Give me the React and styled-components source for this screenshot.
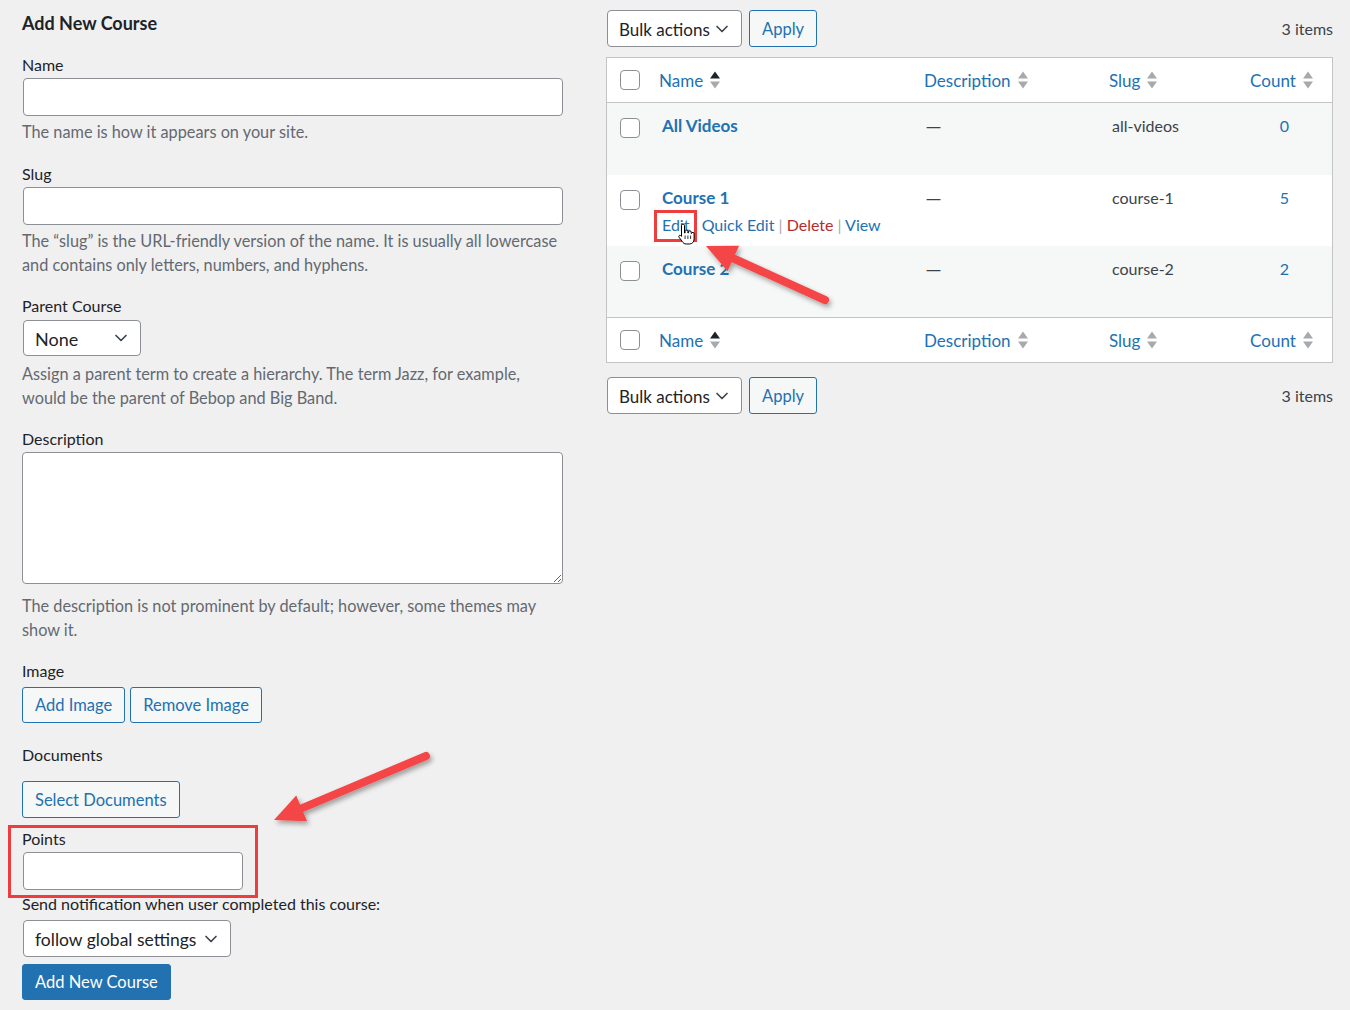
import styled, { createGlobalStyle } from "styled-components";
import { ChevronDown } from "lucide-react";

const GlobalStyle = createGlobalStyle`
body{
    margin: 0;
    background: #f0f0f1;
    font-family: Lato, "Noto Sans", sans-serif;
    color: #1d2327;
}
*{
    box-sizing: border-box;
}
`

const Page = styled.div`
position: relative;
display: flex;
gap: 43px;
padding: 0 17px 0 22px;
min-height: 1010px;
`

const FormCol = styled.div`
width: 541px;
`

const Heading = styled.h2`
margin: 12px 0 0;
font-size: 18px;
font-weight: 700;
line-height: 22px;
`

const Field = styled.div`
margin-top: ${props => props.$mt || 0}px;
`

const Label = styled.label`
display: block;
font-size: 16px;
line-height: 20px;
margin-bottom: ${props => props.$mb ?? 3}px;
`

const TextInput = styled.input`
display: block;
width: ${props => props.$w || "calc(100% - 1px)"};
height: 38px;
margin-left: 1px;
border: 1px solid #8c8f94;
border-radius: 4px;
background: #fff;
`

const TextArea = styled.textarea`
display: block;
width: 100%;
height: 132px;
border: 1px solid #8c8f94;
border-radius: 4px;
background: #fff;
resize: vertical;
`

const Hint = styled.p`
margin: ${props => props.$mt ?? 4}px 0 0;
color: #646970;
font-size: 16.3px;
line-height: 24px;
`

const Select = styled.div`
display: flex;
align-items: center;
justify-content: space-between;
width: ${props => props.$w}px;
height: ${props => props.$h || 36}px;
margin-left: ${props => props.$ml ?? 1}px;
padding: 2px 9px 0 11px;
background: #fff;
border: 1px solid #8c8f94;
border-radius: 4px;
font-size: ${props => props.$size || 18}px;
white-space: nowrap;
color: #1d2327;
svg{
    flex-shrink: 0;
    color: #3c434a;
    margin-top: -2px;
}
`

const ButtonRow = styled.div`
display: flex;
gap: 5px;
margin-top: ${props => props.$mt || 0}px;
`

const Button = styled.button`
height: ${props => props.$h || 36}px;
padding: 0 12px;
border: 1px solid #2271b1;
border-radius: 3px;
background: ${props => props.$primary ? "#2271b1" : "#f6f7f7"};
color: ${props => props.$primary ? "#fff" : "#2271b1"};
font-family: inherit;
font-size: ${props => props.$size || 16.5}px;
cursor: pointer;
`

const TableCol = styled.div`
width: 727px;
`

const TableNav = styled.div`
display: flex;
align-items: center;
gap: 7px;
margin-top: ${props => props.$mt}px;
span{
    margin-left: auto;
    font-size: 16px;
    color: #3c434a;
}
`

const Table = styled.div`
margin-top: 10px;
border: 1px solid #c3c4c7;
background: #fff;
`

const HeadRow = styled.div`
display: grid;
grid-template-columns: 40px 265px 185px 140px 1fr;
align-items: center;
height: 45px;
border-bottom: ${props => props.$top ? "none" : "1px solid #c3c4c7"};
border-top: ${props => props.$top ? "1px solid #c3c4c7" : "none"};
`

const Row = styled.div`
display: grid;
grid-template-columns: 40px 265px 185px 140px 1fr;
align-items: start;
height: ${props => props.$h || 71}px;
background: ${props => props.$alt ? "#f6f7f7" : "#fff"};
`

const CheckCell = styled.div`
padding: ${props => props.$pt || 0}px 0 0 13px;
`

const Checkbox = styled.span`
display: block;
width: 20px;
height: 20px;
border: 1px solid #8c8f94;
border-radius: 4px;
background: #fff;
`

const HeadCell = styled.div`
display: flex;
align-items: center;
justify-content: ${props => props.$center ? "center" : "flex-start"};
gap: 7px;
padding-left: ${props => props.$pl || 0}px;
padding-right: ${props => props.$center ? 6 : 0}px;
font-size: 17px;
color: #2271b1;
`

const Cell = styled.div`
padding: 13px 0 0 ${props => props.$pl || 0}px;
text-align: ${props => props.$center ? "center" : "left"};
font-size: 16px;
line-height: 20px;
color: ${props => props.$link ? "#2271b1" : "#3c434a"};
`

const Dash = styled.span`
font-family: "Noto Sans", sans-serif;
font-size: 15px;
`

const TermName = styled.div`
padding: 12px 0 0 15px;
`

const TermLink = styled.a`
font-size: 17px;
font-weight: 700;
line-height: 22px;
color: #2271b1;
text-decoration: none;
`

const RowActions = styled.div`
margin-top: 5px;
font-size: 16px;
line-height: 22px;
color: #a7aaad;
`

const Action = styled.a`
color: ${props => props.$danger ? "#b32d2e" : "#2271b1"};
text-decoration: none;
`

const Overlay = styled.svg`
position: absolute;
top: 0;
left: 0;
pointer-events: none;
`

function SortIcon({ up = "#a7aaad", down = "#a7aaad" }) {
    return (
        <svg width="10" height="18" viewBox="0 0 10 18">
            <path d="M0 7.5 L5 0.5 L10 7.5 Z" fill={up} />
            <path d="M0 10.5 L10 10.5 L5 17.5 Z" fill={down} />
        </svg>
    )
}

function Head({ top }) {
    return (
        <HeadRow $top={top}>
            <CheckCell><Checkbox /></CheckCell>
            <HeadCell $pl={12}>Name <SortIcon up="#1d2327" /></HeadCell>
            <HeadCell $pl={12}>Description <SortIcon /></HeadCell>
            <HeadCell $pl={12}>Slug <SortIcon /></HeadCell>
            <HeadCell $center>Count <SortIcon /></HeadCell>
        </HeadRow>
    )
}

function Arrow({ x1, y1, x2, y2 }) {
    const dx = x2 - x1
    const dy = y2 - y1
    const len = Math.hypot(dx, dy)
    const ux = dx / len
    const uy = dy / len
    const bx = x2 - 30 * ux
    const by = y2 - 30 * uy
    const nx = -uy
    const ny = ux
    const head = `${x2},${y2} ${bx + 14 * nx},${by + 14 * ny} ${bx - 14 * nx},${by - 14 * ny}`
    return (
        <g filter="url(#shadow)">
            <line x1={x1} y1={y1} x2={bx + 4 * ux} y2={by + 4 * uy} stroke="#f44546" strokeWidth="8" strokeLinecap="round" />
            <polygon points={head} fill="#f44546" />
        </g>
    )
}

const terms = [
    { name: "All Videos", slug: "all-videos", count: 0 },
    { name: "Course 1", slug: "course-1", count: 5, actions: true },
    { name: "Course 2", slug: "course-2", count: 2 },
]

export default function App() {
    return (
        <>
            <GlobalStyle />
            <Page>
                <FormCol>
                    <Heading>Add New Course</Heading>

                    <Field $mt={21}>
                        <Label>Name</Label>
                        <TextInput />
                        <Hint>The name is how it appears on your site.</Hint>
                    </Field>

                    <Field $mt={20}>
                        <Label>Slug</Label>
                        <TextInput />
                        <Hint>The “slug” is the URL-friendly version of the name. It is usually all lowercase and contains only letters, numbers, and hyphens.</Hint>
                    </Field>

                    <Field $mt={19}>
                        <Label $mb={4}>Parent Course</Label>
                        <Select $w={118}>None <ChevronDown size={20} strokeWidth={2} /></Select>
                        <Hint $mt={6}>Assign a parent term to create a hierarchy. The term Jazz, for example, would be the parent of Bebop and Big Band.</Hint>
                    </Field>

                    <Field $mt={19}>
                        <Label>Description</Label>
                        <TextArea />
                        <Hint $mt={10}>The description is not prominent by default; however, some themes may show it.</Hint>
                    </Field>

                    <Field $mt={19}>
                        <Label $mb={6}>Image</Label>
                        <ButtonRow>
                            <Button>Add Image</Button>
                            <Button>Remove Image</Button>
                        </ButtonRow>
                    </Field>

                    <Field $mt={22}>
                        <Label $mb={16}>Documents</Label>
                        <ButtonRow>
                            <Button $h={37}>Select Documents</Button>
                        </ButtonRow>
                    </Field>

                    <Field $mt={11}>
                        <Label>Points</Label>
                        <TextInput $w="220px" />
                    </Field>

                    <Field $mt={4}>
                        <Label $mb={6}>Send notification when user completed this course:</Label>
                        <Select $w={208} $h={37} $size={17.5}>follow global settings <ChevronDown size={20} strokeWidth={2} /></Select>
                        <ButtonRow $mt={7}>
                            <Button $primary>Add New Course</Button>
                        </ButtonRow>
                    </Field>
                </FormCol>

                <TableCol>
                    <TableNav $mt={10}>
                        <Select $w={135} $h={37} $ml={1} $size={17}>Bulk actions <ChevronDown size={20} strokeWidth={2} /></Select>
                        <Button $h={37}>Apply</Button>
                        <span>3 items</span>
                    </TableNav>

                    <Table>
                        <Head />
                        {terms.map((term, index) => (
                            <Row key={term.slug} $alt={index % 2 === 0} $h={index === 0 ? 72 : 71}>
                                <CheckCell $pt={15}><Checkbox /></CheckCell>
                                <TermName>
                                    <TermLink href="#">{term.name}</TermLink>
                                    {term.actions && (
                                        <RowActions>
                                            <Action href="#">Edit</Action> | <Action href="#">Quick Edit</Action> | <Action href="#" $danger>Delete</Action> | <Action href="#">View</Action>
                                        </RowActions>
                                    )}
                                </TermName>
                                <Cell $pl={14}><Dash>—</Dash></Cell>
                                <Cell $pl={15}>{term.slug}</Cell>
                                <Cell $center $link>{term.count}</Cell>
                            </Row>
                        ))}
                        <Head top />
                    </Table>

                    <TableNav $mt={14}>
                        <Select $w={135} $h={37} $ml={1} $size={17}>Bulk actions <ChevronDown size={20} strokeWidth={2} /></Select>
                        <Button $h={37}>Apply</Button>
                        <span>3 items</span>
                    </TableNav>
                </TableCol>

                <Overlay width="1350" height="1010" viewBox="0 0 1350 1010">
                    <defs>
                        <filter id="shadow" x="-20%" y="-20%" width="140%" height="140%">
                            <feDropShadow dx="2" dy="3" stdDeviation="2.5" floodColor="#000" floodOpacity="0.35" />
                        </filter>
                    </defs>
                    <rect x="9.5" y="826.5" width="247" height="70" fill="none" stroke="#ee3d3f" strokeWidth="3" />
                    <rect x="655.5" y="211.5" width="40" height="29" fill="none" stroke="#ee3d3f" strokeWidth="3" />
                    <Arrow x1={426} y1={756} x2={274} y2={820} />
                    <Arrow x1={825} y1={300} x2={706} y2={246} />
                    <g transform="translate(677 224)">
                        <path d="M4.5 1.5a1.5 1.5 0 0 1 3 0V9h.6V7.6a1.4 1.4 0 0 1 2.8 0V9h.5V8.2a1.4 1.4 0 0 1 2.8 0v1.3h.3a1.3 1.3 0 0 1 2.6.4v5.1c0 3-1.9 5-4.8 5H9.2c-1.9 0-3-1-3.9-2.4L2 13.2c-.7-1.1.5-2.4 1.6-1.7l.9.8Z" fill="#fff" stroke="#000" strokeWidth="1" strokeLinejoin="round" />
                        <path d="M8.1 11.5v3.5M10.9 11.5v3.5M13.6 11.5v3.5" stroke="#000" strokeWidth="0.8" />
                    </g>
                </Overlay>
            </Page>
        </>
    )
}
